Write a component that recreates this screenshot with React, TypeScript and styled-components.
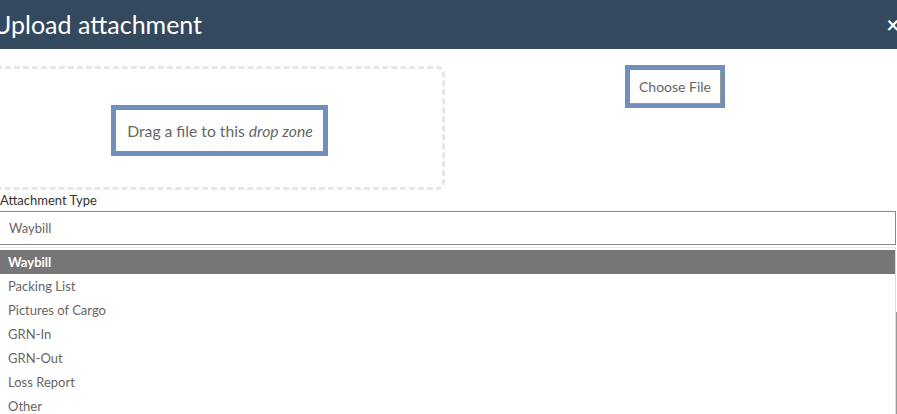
import React from "react";
import styled, { createGlobalStyle } from "styled-components";

const Global = createGlobalStyle`
  html, body { margin: 0; padding: 0; background: #fff; overflow: hidden; }
  body { font-family: Lato, "Open Sans", sans-serif; }
`;

const Modal = styled.div`
  margin-left: -12px;
  width: 909px;
  height: 414px;
  background: #fff;
  display: flex;
  flex-direction: column;
`;

const Header = styled.header`
  height: 49px;
  background: #34495e;
  display: flex;
  align-items: center;
  justify-content: space-between;
  padding-left: 5px;
  box-sizing: border-box;
`;

const Title = styled.h1`
  margin: 0;
  font-family: Lato, sans-serif;
  font-weight: 400;
  font-size: 25px;
  color: #fff;
  line-height: 1;
`;

const Close = styled.button`
  background: none;
  border: none;
  padding: 0;
  margin-right: -6px;
  color: #fff;
  font-family: Lato, sans-serif;
  font-weight: 700;
  font-size: 22px;
  line-height: 1;
  width: 20px;
  display: flex;
  align-items: center;
  justify-content: center;
`;

const TopRow = styled.div`
  display: flex;
  align-items: flex-start;
`;

const DropZone = styled.div`
  margin-top: 17px;
  width: 457px;
  height: 124px;
  box-sizing: border-box;
  border: 3px dashed #e3e6ea;
  border-radius: 8px;
  display: flex;
  align-items: center;
  justify-content: center;
  padding-left: 6px;
  padding-top: 5px;
`;

const Focused = styled.div`
  border: 5px solid #7090bc;
  background: #fff;
  padding: 0 10px 0 11px;
  height: 41px;
  display: flex;
  align-items: center;
  font-size: 15.7px;
  color: #666;
  em { font-style: italic; }
`;

const RightCol = styled.div`
  flex: 1;
  display: flex;
  justify-content: center;
  padding-top: 16px;
  padding-left: 8px;
`;

const FileButton = styled.button`
  border: 5px solid #7090bc;
  background: #fff;
  padding: 0;
  font-family: Lato, sans-serif;
  font-size: 14px;
  color: #666;
  cursor: pointer;
  span {
    display: flex;
    align-items: center;
    justify-content: center;
    width: 90px;
    height: 33px;
    box-shadow: 1px 1px 0 #999;
  }
`;

const Label = styled.label`
  display: block;
  padding-left: 12px;
  margin-top: 2px;
  font-size: 13px;
  line-height: 16px;
  color: #333;
`;

const SelectBox = styled.div`
  margin-top: 3px;
  margin-right: 1px;
  height: 34px;
  box-sizing: border-box;
  border: 1px solid #888;
  display: flex;
  align-items: center;
  padding-left: 20px;
  font-size: 13px;
  color: #666;
`;

const List = styled.ul`
  list-style: none;
  margin: 2px 1px 0 0;
  padding: 2px 0 0;
  border-top: 1px solid #e6e6e6;
  border-right: 1px solid #ddd;
  flex: 1;
  overflow: hidden;
`;

const Item = styled.li<{ $active?: boolean }>`
  height: 24px;
  display: flex;
  align-items: center;
  padding-left: 20px;
  font-size: 13px;
  color: ${(p) => (p.$active ? "#fff" : "#666")};
  background: ${(p) => (p.$active ? "#767676" : "#fff")};
  font-weight: ${(p) => (p.$active ? 700 : 400)};
`;

const ScrollHint = styled.div`
  position: absolute;
  right: 0;
  top: 312px;
  width: 1px;
  height: 102px;
  background: #999;
`;

const options = ["Waybill", "Packing List", "Pictures of Cargo", "GRN-In", "GRN-Out", "Loss Report", "Other"];

export default function App() {
  return (
    <>
      <Global />
      <Modal>
        <Header>
          <Title>Upload attachment</Title>
          <Close aria-label="Close">×</Close>
        </Header>
        <TopRow>
          <DropZone>
            <Focused>
              Drag a file to this&nbsp;<em>drop zone</em>
            </Focused>
          </DropZone>
          <RightCol>
            <FileButton>
              <span>Choose File</span>
            </FileButton>
          </RightCol>
        </TopRow>
        <Label>Attachment Type</Label>
        <SelectBox>Waybill</SelectBox>
        <List>
          {options.map((o, i) => (
            <Item key={o} $active={i === 0}>
              {o}
            </Item>
          ))}
        </List>
      </Modal>
      <ScrollHint />
    </>
  );
}
